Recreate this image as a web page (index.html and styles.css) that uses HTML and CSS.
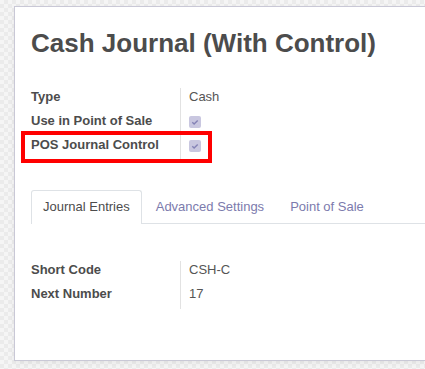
FILE: index.html
```html
<!DOCTYPE html>
<html lang="en">
<head>
  <meta charset="UTF-8">
  <meta name="viewport" content="width=device-width, initial-scale=1.0">
  <title>Cash Journal (With Control)</title>
  <link rel="stylesheet" href="styles.css">
</head>
<body>
  <div class="sheet">
    <h1 class="title">Cash Journal (With Control)</h1>

    <!-- Main fields -->
    <div class="field-group">
      <div class="field-row">
        <div class="field-label">Type</div>
        <div class="field-value">Cash</div>
      </div>
      <div class="field-row">
        <div class="field-label">Use in Point of Sale</div>
        <div class="field-value"><span class="check"><svg viewBox="0 0 12 12" width="12" height="12"><path d="M3.3 6.3 L5.1 8 L8.7 4.4" fill="none" stroke="#8583b6" stroke-width="1.4"/></svg></span></div>
      </div>
      <div class="field-row highlighted">
        <div class="field-label">POS Journal Control</div>
        <div class="field-value"><span class="check"><svg viewBox="0 0 12 12" width="12" height="12"><path d="M3.3 6.3 L5.1 8 L8.7 4.4" fill="none" stroke="#8583b6" stroke-width="1.4"/></svg></span></div>
        <span class="highlight-box"></span>
      </div>
    </div>

    <!-- Tabs -->
    <ul class="tabs">
      <li class="tab active">Journal Entries</li>
      <li class="tab">Advanced Settings</li>
      <li class="tab">Point of Sale</li>
    </ul>

    <div class="field-group tab-content">
      <div class="field-row">
        <div class="field-label">Short Code</div>
        <div class="field-value">CSH-C</div>
      </div>
      <div class="field-row">
        <div class="field-label">Next Number</div>
        <div class="field-value">17</div>
      </div>
    </div>
  </div>
</body>
</html>
```

FILE: styles.css
```css
body {
  margin: 0;
  padding: 6px 0 0 14px;
  font-family: "Liberation Sans", Arial, sans-serif;
  font-size: 13px;
  color: #4c4c4c;
  overflow: hidden;
  height: 369px;
  box-sizing: border-box;
  background-color: #f5f5f5;
  background-image: conic-gradient(#ebebeb 25%, transparent 0 50%, #ebebeb 0 75%, transparent 0);
  background-size: 8px 8px;
}
.sheet {
  width: 411px;
  height: 355px;
  box-sizing: border-box;
  background-color: #fff;
  border: 1px solid #c9c8d6;
  border-right: none;
  box-shadow: 0 2px 6px rgba(0, 0, 0, 0.06);
  padding: 21px 16px 0;
}
.title {
  margin: 0 0 29px;
  font-size: 26px;
  line-height: 31px;
  font-weight: bold;
  color: #4c4c4c;
  white-space: nowrap;
}
.field-row {
  display: grid;
  grid-template-columns: 150px 1fr;
  height: 24px;
}
.field-label {
  font-weight: bold;
  line-height: 18px;
  border-right: 1px solid #e2e2e2;
}
.field-value {
  line-height: 18px;
  padding-left: 8px;
  color: #555;
}
.check {
  display: block;
  width: 12px;
  height: 12px;
  margin-top: 4px;
  border-radius: 2px;
  background-color: #c9c7e0;
}
.check svg {
  display: block;
}
.highlighted {
  position: relative;
}
.highlight-box {
  position: absolute;
  left: -10px;
  top: -5px;
  width: 191px;
  height: 32px;
  box-sizing: border-box;
  border: 4px solid #ff0000;
}
.tabs {
  list-style: none;
  margin: 30px -16px 0 0;
  padding: 0;
  display: flex;
  border-bottom: 1px solid #dee2e6;
}
.tab {
  height: 32px;
  line-height: 31px;
  padding: 0 11px;
  margin-right: 2px;
  margin-bottom: -1px;
  border: 1px solid transparent;
  border-bottom: none;
  border-radius: 3px 3px 0 0;
  color: #7c7bad;
}
.tab.active {
  color: #4c4c4c;
  background-color: #fff;
  border-color: #dee2e6;
  height: 33px;
}
.tab-content {
  margin-top: 37px;
}
```
